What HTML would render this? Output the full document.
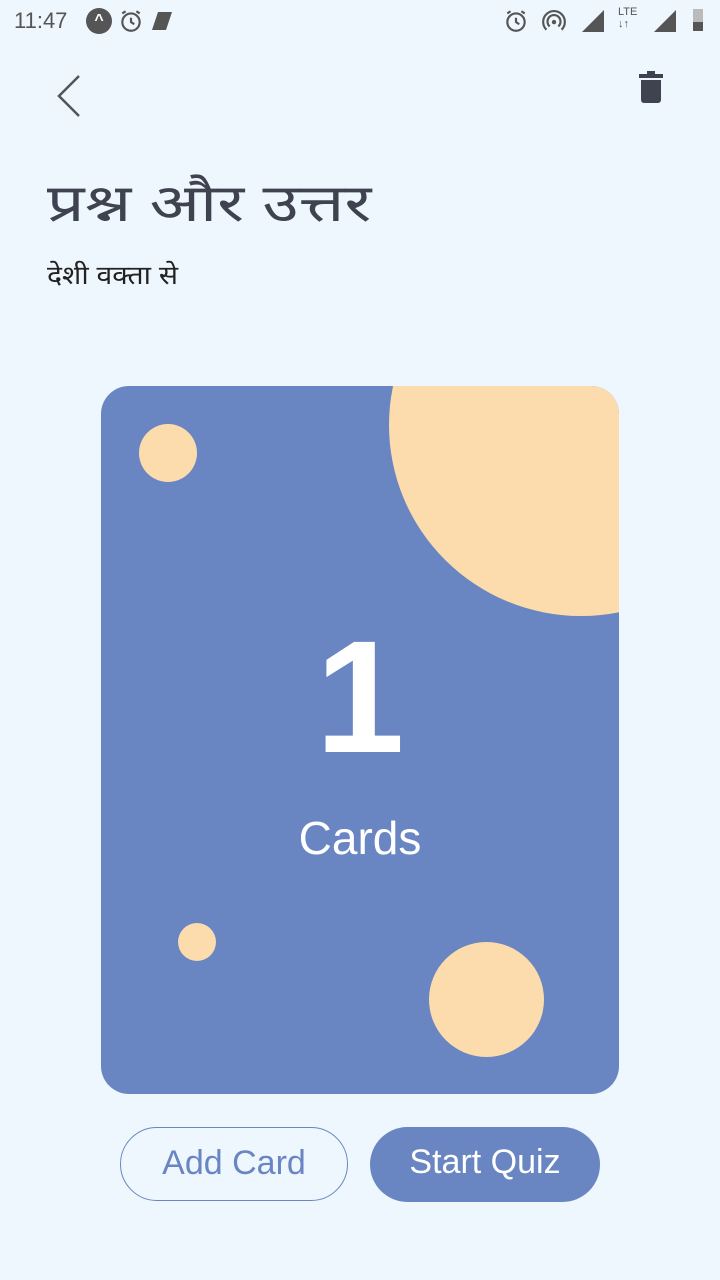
<!DOCTYPE html>
<html><head><meta charset="utf-8"><style>
body{margin:0;width:720px;height:1280px;background:#eef6fe;position:relative;overflow:hidden;font-family:"Liberation Sans",sans-serif;color:#3f4350}
.a{position:absolute}
.c{position:absolute;border-radius:50%;background:#fcdcad}
</style></head><body>
<div class="a" style="left:14px;top:8px;font-size:22px;color:#555">11:47</div>
<div class="a" style="left:86px;top:8px;width:26px;height:26px;border-radius:50%;background:#555;color:#fff;font-size:16px;text-align:center;line-height:26px;font-weight:bold">^</div>
<svg class="a" style="left:118px;top:8px" width="26" height="26" viewBox="0 0 24 24"><circle cx="12" cy="13" r="8" fill="none" stroke="#555" stroke-width="2"/><path d="M12 9v4l3 2M4 5l3-2M20 5l-3-2" stroke="#555" stroke-width="2" fill="none"/></svg>
<svg class="a" style="left:150px;top:10px" width="26" height="22"><path d="M8 2h14l-6 18H2z" fill="#555"/></svg>
<svg class="a" style="left:503px;top:8px" width="26" height="26" viewBox="0 0 24 24"><circle cx="12" cy="13" r="8" fill="none" stroke="#555" stroke-width="2"/><path d="M12 9v4l3 2M4 5l3-2M20 5l-3-2" stroke="#555" stroke-width="2" fill="none"/></svg>
<svg class="a" style="left:541px;top:8px" width="26" height="26" viewBox="0 0 24 24"><circle cx="12" cy="13" r="2" fill="#555"/><path d="M8 17a6 6 0 1 1 8 0M5 20a10 10 0 1 1 14 0" stroke="#555" stroke-width="2" fill="none"/></svg>
<svg class="a" style="left:580px;top:8px" width="26" height="24"><path d="M24 2v22H2z" fill="#555"/></svg>
<div class="a" style="left:618px;top:6px;font-size:11px;color:#555">LTE<br>↓↑</div>
<svg class="a" style="left:652px;top:8px" width="26" height="24"><path d="M24 2v22H2z" fill="#555"/></svg>
<div class="a" style="left:693px;top:9px;width:10px;height:22px;background:#bbb"></div>
<div class="a" style="left:693px;top:22px;width:10px;height:9px;background:#555"></div>
<svg class="a" style="left:52px;top:72px" width="32" height="48"><path d="M27 4L7 24l20 20" stroke="#555" stroke-width="2.5" fill="none"/></svg>
<svg class="a" style="left:638px;top:70px" width="28" height="36"><rect x="1" y="4" width="24" height="4" fill="#3f4350"/><rect x="9" y="1" width="8" height="4" fill="#3f4350"/><path d="M3 10h20v20a3 3 0 0 1-3 3H6a3 3 0 0 1-3-3z" fill="#3f4350"/></svg>
<div class="a" style="left:47px;top:166px;font-size:52px;color:#3f4350;transform:scaleX(1.27);transform-origin:0 0;white-space:nowrap">प्रश्न और उत्तर</div>
<div class="a" style="left:47px;top:256px;font-size:26px;color:#222;transform:scaleX(1.09);transform-origin:0 0;white-space:nowrap">देशी वक्ता से</div>
<div class="a" style="left:101px;top:386px;width:518px;height:708px;border-radius:28px;background:#6986c2;overflow:hidden">
<div class="c" style="left:288px;top:-152px;width:384px;height:382px"></div>
<div class="c" style="left:38px;top:38px;width:58px;height:58px"></div>
<div class="c" style="left:77px;top:537px;width:38px;height:38px"></div>
<div class="c" style="left:328px;top:556px;width:115px;height:115px"></div>
<div class="a" style="left:0;width:518px;top:216px;text-align:center;color:#fff;font-size:160px;line-height:190px;font-weight:bold">1</div>
<div class="a" style="left:0;width:518px;top:424px;text-align:center;color:#fff;font-size:46px;line-height:56px">Cards</div>
</div>
<div class="a" style="left:120px;top:1127px;width:226px;height:72px;border:1.5px solid #6986c2;border-radius:38px;color:#6986c2;font-size:34px;line-height:70px;text-align:center">Add Card</div>
<div class="a" style="left:370px;top:1127px;width:230px;height:75px;background:#6986c2;border-radius:38px;color:#fff;font-size:34px;line-height:70px;text-align:center">Start Quiz</div>
</body></html>
